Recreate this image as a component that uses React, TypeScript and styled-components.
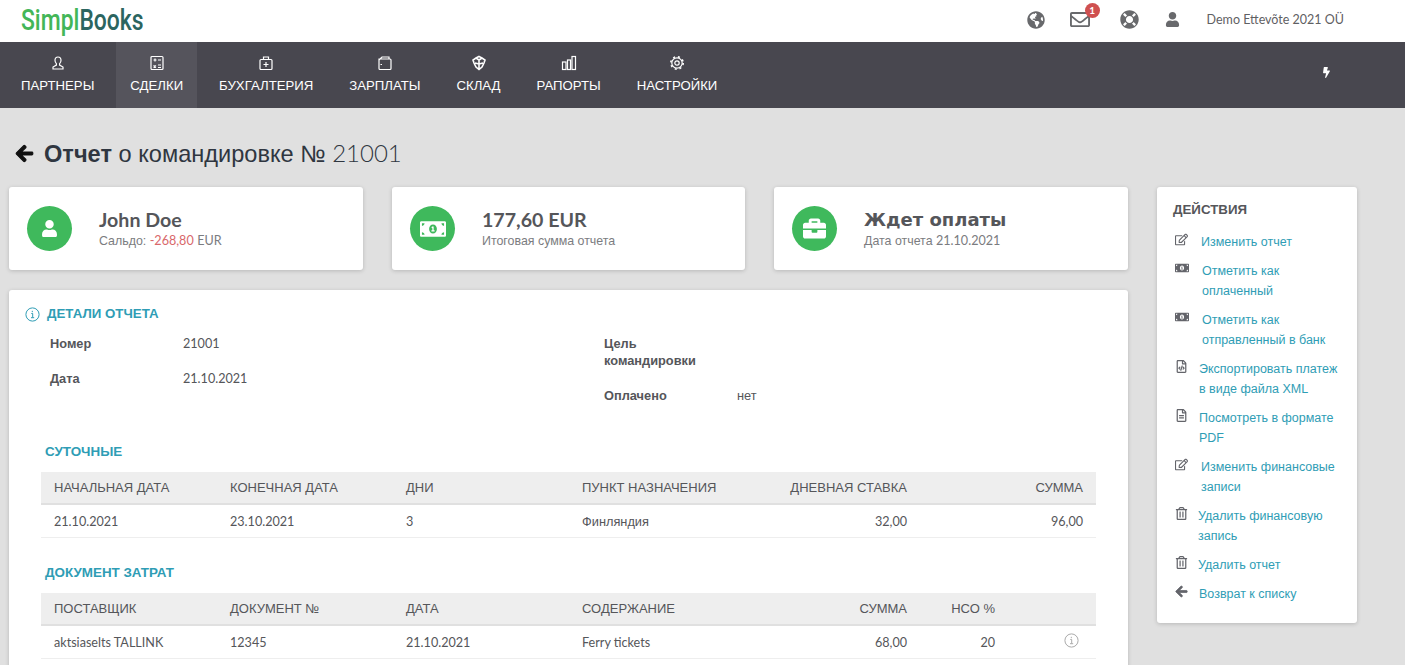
import * as React from 'react';
import styled, { createGlobalStyle } from 'styled-components';
import {
    FaArrowLeft,
    FaBolt,
    FaBriefcase,
    FaGlobeAmericas,
    FaLifeRing,
    FaMoneyBillAlt,
    FaRegEdit,
    FaRegEnvelope,
    FaRegFileAlt,
    FaRegFileCode,
    FaRegTrashAlt,
    FaUser,
} from 'react-icons/fa';

const Colors = {
    Nav: '#48474f',
    NavActive: '#55545c',
    Page: '#e0e0e0',
    Green: '#3fb95c',
    Teal: '#2f9db5',
    Text: '#55565a',
    Muted: '#7b7c80',
};

const LATIN = `Lato, 'Liberation Sans', Arial, sans-serif`;
const CYRILLIC = `'Liberation Sans', Arial, sans-serif`;

const GlobalStyle = createGlobalStyle`
    html, body {
        margin: 0;
        height: 100%;
        overflow: hidden;
        background: ${Colors.Page};
    }
    body {
        font-family: ${CYRILLIC};
        font-size: 12.8px;
        color: ${Colors.Text};
    }
`;

// Latin text and digits are set in Lato, the cyrillic around them falls back
const Num = styled.span`
    font-family: ${LATIN};
    font-size: 12.6px;
`;

const TopBar = styled.header`
    display: flex;
    align-items: center;
    justify-content: space-between;
    height: 42px;
    box-sizing: border-box;
    background: #fff;
    padding: 0 61px 3px 21px;
`;

const Logo = styled.div`
    font-family: Roboto, sans-serif;
    font-size: 29px;
    font-weight: 500;
    line-height: 42px;
    width: 123px;
    white-space: nowrap;
    transform: scaleX(0.79);
    transform-origin: left center;
    color: #2b6560;

    span {
        color: #43b658;
    }
`;

const TopActions = styled.div`
    display: flex;
    align-items: center;
`;

const TopIcon = styled.div<{ $w: number; $gap: number }>`
    position: relative;
    display: flex;
    justify-content: center;
    width: ${(p) => p.$w}px;
    margin-left: ${(p) => p.$gap}px;
    color: #68696c;
    font-size: 18px;
`;

const Badge = styled.span`
    position: absolute;
    top: -6px;
    left: 15px;
    width: 15px;
    height: 15px;
    border-radius: 50%;
    background: #cf5050;
    color: #fff;
    font-family: ${LATIN};
    font-size: 10px;
    font-weight: 700;
    line-height: 15px;
    text-align: center;
`;

const Company = styled.span`
    margin-left: 26px;
    font-family: ${LATIN};
    font-size: 12.5px;
    color: #5f6063;
`;

const Nav = styled.nav`
    display: flex;
    justify-content: space-between;
    height: 66px;
    background: ${Colors.Nav};
    padding: 0 73px 0 7px;
`;

const NavItems = styled.div`
    display: flex;
    gap: 8px;
`;

const NavItem = styled.a<{ $active?: boolean }>`
    display: flex;
    flex-direction: column;
    align-items: center;
    gap: 6px;
    padding: 13px 14px 0;
    background: ${(p) => (p.$active ? Colors.NavActive : 'transparent')};
    color: #fff;
    font-size: 13.2px;
    line-height: 18px;
    text-transform: uppercase;
`;

const Bolt = styled.div`
    display: flex;
    align-items: center;
    color: #fff;
    font-size: 11px;
    margin-bottom: 6px;
`;

const Content = styled.main`
    padding: 0 0 0 9px;
`;

const Title = styled.h1`
    display: flex;
    align-items: center;
    gap: 10px;
    height: 79px;
    box-sizing: border-box;
    margin: 0;
    padding: 11px 0 0 6px;
    font-size: 23.6px;
    font-weight: 400;
    color: #2f3640;

    svg {
        color: #111;
        font-size: 19px;
        stroke: currentColor;
        stroke-width: 30;
    }
    b {
        font-weight: 700;
    }
    small {
        font-family: ${LATIN};
        font-size: 24px;
        font-weight: 300;
    }
`;

const Columns = styled.div`
    display: flex;
    gap: 29px;
    align-items: flex-start;
`;

const MainColumn = styled.div`
    width: 1119px;
`;

const Cards = styled.div`
    display: grid;
    grid-template-columns: 354px 353px 354px;
    column-gap: 29px;
    margin-bottom: 20px;
`;

const Card = styled.section`
    display: flex;
    align-items: center;
    gap: 27px;
    height: 83px;
    padding-left: 18px;
    background: #fff;
    border-radius: 3px;
    box-shadow: 0 1px 4px rgba(0, 0, 0, 0.18);
`;

const Round = styled.div`
    display: flex;
    align-items: center;
    justify-content: center;
    flex: none;
    width: 45px;
    height: 45px;
    border-radius: 50%;
    background: ${Colors.Green};
    color: #fff;
    font-size: 20px;
`;

const CardText = styled.div`
    padding-bottom: 2px;
`;

const CardTitle = styled.div`
    font-family: ${LATIN};
    font-size: 19.6px;
    font-weight: 700;
    line-height: 26px;
    color: #55565a;
`;

const StatusTitle = styled(CardTitle)`
    font-family: 'DejaVu Sans', sans-serif;
    font-size: 18px;
`;

const CardSub = styled.div`
    font-size: 12.4px;
    line-height: 16px;
    color: ${Colors.Muted};

    em {
        font-style: normal;
        color: #d9686b;
    }
`;

const Panel = styled.section`
    height: 420px;
    padding: 15px 32px 0 16px;
    background: #fff;
    border-radius: 3px;
    box-shadow: 0 1px 4px rgba(0, 0, 0, 0.18);
`;

const PanelHead = styled.h3`
    display: flex;
    align-items: center;
    gap: 7px;
    margin: 0 0 12px;
    line-height: 18px;
    font-size: 13.3px;
    font-weight: 700;
    text-transform: uppercase;
    color: ${Colors.Teal};
`;

const Details = styled.div`
    display: grid;
    grid-template-columns: 554px 1fr;
    padding-left: 25px;
    margin-bottom: 21px;
`;

const Field = styled.div`
    display: grid;
    grid-template-columns: 133px 1fr;
    margin-bottom: 18px;
    line-height: 17px;

    label {
        font-weight: 700;
    }
`;

const Narrow = styled.span`
    display: block;
    width: 100px;
`;

const SectionTitle = styled.h4`
    margin: 0 0 11px 20px;
    font-size: 13.4px;
    line-height: 18px;
    font-weight: 700;
    text-transform: uppercase;
    color: ${Colors.Teal};
`;

const Table = styled.table`
    width: 1055px;
    margin: 0 0 26px 16px;
    table-layout: fixed;
    border-collapse: collapse;
`;

const Th = styled.th<{ $right?: boolean }>`
    height: 31px;
    padding: 0 13px;
    background: #eee;
    border-bottom: 2px solid #e0e0e0;
    font-weight: 400;
    font-size: 13px;
    color: #55565a;
    text-transform: uppercase;
    text-align: ${(p) => (p.$right ? 'right' : 'left')};
    white-space: nowrap;
`;

const Td = styled.td<{ $right?: boolean }>`
    height: 32px;
    padding: 0 13px;
    border-bottom: 1px solid #eee;
    text-align: ${(p) => (p.$right ? 'right' : 'left')};
`;

const IconTd = styled(Td)`
    padding-right: 17px;
    text-align: right;
`;

const Side = styled.aside`
    width: 200px;
    height: 436px;
    box-sizing: border-box;
    padding: 15px 16px 0;
    background: #fff;
    border-radius: 3px;
    box-shadow: 0 1px 4px rgba(0, 0, 0, 0.18);
`;

const SideTitle = styled.h3`
    margin: 0 0 14px;
    font-size: 13.3px;
    line-height: 16px;
    font-weight: 700;
    text-transform: uppercase;
    color: #55565a;
`;

const Action = styled.a`
    display: flex;
    margin-bottom: 9px;
    line-height: 20px;
    color: ${Colors.Teal};
    font-size: 12.5px;
`;

const ActionIcon = styled.span<{ $w: number }>`
    flex: none;
    width: ${(p) => p.$w}px;
    padding-left: 2px;
    color: #63646a;
    font-size: 13px;
    line-height: 20px;
    box-sizing: border-box;
`;

const NavSvg: React.FC<{ children: React.ReactNode }> = ({ children }) => (
    <svg width="16" height="16" viewBox="0 0 16 16" fill="none" stroke="#fff" strokeWidth="1.2">
        {children}
    </svg>
);

const InfoIcon: React.FC<{ color: string }> = ({ color }) => (
    <svg width="15" height="15" viewBox="0 0 15 15" fill="none" stroke={color}>
        <circle cx="7.5" cy="7.5" r="6.6" />
        <path d="M6.3 6.5h1.4v4M6 10.700h3.200M7.300 3.800v1.400" />
    </svg>
);

const navItems: { label: string; icon: React.ReactNode; active?: boolean }[] = [
    {
        label: 'Партнеры',
        icon: (
            <NavSvg>
                <path d="M8 2c-2 0-3 1.300-3 3.200 0 1.500.6 2.700 1.400 3.500v1.400L3 12v2h10v-2l-3.400-1.900V8.700c.8-.8 1.400-2 1.400-3.500C11 3.300 10 2 8 2z" />
            </NavSvg>
        ),
    },
    {
        label: 'Сделки',
        active: true,
        icon: (
            <NavSvg>
                <rect x="2" y="1.500" width="12" height="13" rx="1" />
                <path d="M4.500 5h3M6 3.500v3M9 5h3M4.500 10.500l2.500 2M7 10.500l-2.500 2M9 10h3M9 12.500h3" />
            </NavSvg>
        ),
    },
    {
        label: 'Бухгалтерия',
        icon: (
            <NavSvg>
                <rect x="2" y="4.500" width="12" height="10" rx="1" />
                <path d="M5.500 4.500V2h5v2.500M8 7v5M5.500 9.500h5" />
            </NavSvg>
        ),
    },
    {
        label: 'Зарплаты',
        icon: (
            <NavSvg>
                <path d="M2 5v8.500a1 1 0 0 0 1 1h10a1 1 0 0 0 1-1V5a1 1 0 0 0-1-1H2zM2 5l3-3h7v2" />
                <path d="M3.500 9.500h1.500" />
            </NavSvg>
        ),
    },
    {
        label: 'Склад',
        icon: (
            <NavSvg>
                <path
                    d="M8 1.500l3 1.500 3 2-1 3-2 4-3 2.500-3-2.500-2-4-1-3 3-2zM8 5l3-2M8 5L5 3M8 5v4M8 9l4-1M8 9L4 8M8 9v5.500"
                    strokeWidth="1.600"
                />
            </NavSvg>
        ),
    },
    {
        label: 'Рапорты',
        icon: (
            <NavSvg>
                <rect x="1.500" y="7" width="3.500" height="7.500" />
                <rect x="6.500" y="5" width="3" height="9.500" />
                <rect x="11" y="1.500" width="3.500" height="13" />
            </NavSvg>
        ),
    },
    {
        label: 'Настройки',
        icon: (
            <NavSvg>
                <circle cx="8" cy="8" r="2.200" />
                <circle cx="8" cy="8" r="5.200" />
                <circle cx="8" cy="8" r="6.200" strokeWidth="1.600" strokeDasharray="2 2.900" />
            </NavSvg>
        ),
    },
];

const actions: { label: string; icon: React.ReactNode; w: number }[] = [
    { label: 'Изменить отчет', icon: <FaRegEdit />, w: 28 },
    { label: 'Отметить как оплаченный', icon: <FaMoneyBillAlt size={14} />, w: 29 },
    { label: 'Отметить как отправленный в банк', icon: <FaMoneyBillAlt size={14} />, w: 29 },
    { label: 'Экспортировать платеж в виде файла XML', icon: <FaRegFileCode />, w: 26 },
    { label: 'Посмотреть в формате PDF', icon: <FaRegFileAlt />, w: 26 },
    { label: 'Изменить финансовые записи', icon: <FaRegEdit />, w: 28 },
    { label: 'Удалить финансовую запись', icon: <FaRegTrashAlt />, w: 25 },
    { label: 'Удалить отчет', icon: <FaRegTrashAlt />, w: 25 },
    { label: 'Возврат к списку', icon: <FaArrowLeft stroke="currentColor" strokeWidth={30} />, w: 26 },
];

export default function App() {
    return (
        <>
            <GlobalStyle />
            <TopBar>
                <Logo>
                    <span>Simpl</span>Books
                </Logo>
                <TopActions>
                    <TopIcon $w={20} $gap={0}>
                        <FaGlobeAmericas />
                    </TopIcon>
                    <TopIcon $w={20} $gap={24}>
                        <FaRegEnvelope size={21} />
                        <Badge>1</Badge>
                    </TopIcon>
                    <TopIcon $w={20} $gap={30}>
                        <FaLifeRing size={19} />
                    </TopIcon>
                    <TopIcon $w={16} $gap={25}>
                        <FaUser size={15} />
                    </TopIcon>
                    <Company>Demo Ettevõte 2021 OÜ</Company>
                </TopActions>
            </TopBar>
            <Nav>
                <NavItems>
                    {navItems.map((item) => (
                        <NavItem key={item.label} $active={item.active}>
                            {item.icon}
                            {item.label}
                        </NavItem>
                    ))}
                </NavItems>
                <Bolt>
                    <FaBolt />
                </Bolt>
            </Nav>
            <Content>
                <Title>
                    <FaArrowLeft />
                    <span>
                        <b>Отчет</b> о командировке № <small>21001</small>
                    </span>
                </Title>
                <Columns>
                    <MainColumn>
                        <Cards>
                            <Card>
                                <Round>
                                    <FaUser size={17} />
                                </Round>
                                <CardText>
                                    <CardTitle>John Doe</CardTitle>
                                    <CardSub>
                                        Сальдо: <em><Num>-268,80</Num></em> <Num>EUR</Num>
                                    </CardSub>
                                </CardText>
                            </Card>
                            <Card>
                                <Round>
                                    <FaMoneyBillAlt size={26} />
                                </Round>
                                <CardText>
                                    <CardTitle>177,60 EUR</CardTitle>
                                    <CardSub>Итоговая сумма отчета</CardSub>
                                </CardText>
                            </Card>
                            <Card>
                                <Round>
                                    <FaBriefcase size={23} />
                                </Round>
                                <CardText>
                                    <StatusTitle>Ждет оплаты</StatusTitle>
                                    <CardSub>
                                        Дата отчета <Num>21.10.2021</Num>
                                    </CardSub>
                                </CardText>
                            </Card>
                        </Cards>
                        <Panel>
                            <PanelHead>
                                <InfoIcon color={Colors.Teal} />
                                Детали отчета
                            </PanelHead>
                            <Details>
                                <div>
                                    <Field>
                                        <label>Номер</label>
                                        <Num>21001</Num>
                                    </Field>
                                    <Field>
                                        <label>Дата</label>
                                        <Num>21.10.2021</Num>
                                    </Field>
                                </div>
                                <div>
                                    <Field>
                                        <label>
                                            <Narrow>Цель командировки</Narrow>
                                        </label>
                                        <span />
                                    </Field>
                                    <Field>
                                        <label>Оплачено</label>
                                        <span>нет</span>
                                    </Field>
                                </div>
                            </Details>
                            <SectionTitle>Суточные</SectionTitle>
                            <Table>
                                <colgroup>
                                    <col width="176" />
                                    <col width="176" />
                                    <col width="176" />
                                    <col width="176" />
                                    <col width="175" />
                                    <col width="176" />
                                </colgroup>
                                <thead>
                                    <tr>
                                        <Th>Начальная дата</Th>
                                        <Th>Конечная дата</Th>
                                        <Th>Дни</Th>
                                        <Th>Пункт назначения</Th>
                                        <Th $right>Дневная ставка</Th>
                                        <Th $right>Сумма</Th>
                                    </tr>
                                </thead>
                                <tbody>
                                    <tr>
                                        <Td><Num>21.10.2021</Num></Td>
                                        <Td><Num>23.10.2021</Num></Td>
                                        <Td><Num>3</Num></Td>
                                        <Td>Финляндия</Td>
                                        <Td $right><Num>32,00</Num></Td>
                                        <Td $right><Num>96,00</Num></Td>
                                    </tr>
                                </tbody>
                            </Table>
                            <SectionTitle>Документ затрат</SectionTitle>
                            <Table>
                                <colgroup>
                                    <col width="176" />
                                    <col width="176" />
                                    <col width="176" />
                                    <col width="176" />
                                    <col width="175" />
                                    <col width="88" />
                                    <col width="88" />
                                </colgroup>
                                <thead>
                                    <tr>
                                        <Th>Поставщик</Th>
                                        <Th>Документ №</Th>
                                        <Th>Дата</Th>
                                        <Th>Содержание</Th>
                                        <Th $right>Сумма</Th>
                                        <Th $right>НСО %</Th>
                                        <Th />
                                    </tr>
                                </thead>
                                <tbody>
                                    <tr>
                                        <Td><Num>aktsiaselts TALLINK</Num></Td>
                                        <Td><Num>12345</Num></Td>
                                        <Td><Num>21.10.2021</Num></Td>
                                        <Td><Num>Ferry tickets</Num></Td>
                                        <Td $right><Num>68,00</Num></Td>
                                        <Td $right><Num>20</Num></Td>
                                        <IconTd>
                                            <InfoIcon color="#aaa" />
                                        </IconTd>
                                    </tr>
                                </tbody>
                            </Table>
                        </Panel>
                    </MainColumn>
                    <Side>
                        <SideTitle>Действия</SideTitle>
                        {actions.map((action) => (
                            <Action key={action.label}>
                                <ActionIcon $w={action.w}>{action.icon}</ActionIcon>
                                <span>{action.label}</span>
                            </Action>
                        ))}
                    </Side>
                </Columns>
            </Content>
        </>
    );
}
